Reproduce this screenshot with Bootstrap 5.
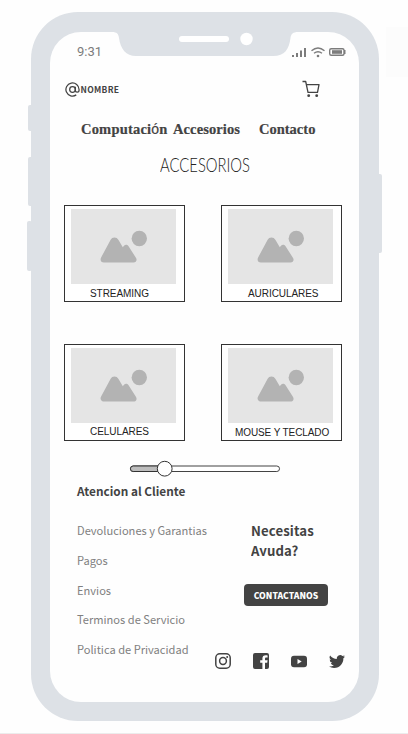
<!DOCTYPE html>
<html lang="es">
<head>
<meta charset="utf-8">
<meta name="viewport" content="width=device-width, initial-scale=1">
<title>Accesorios</title>
<link href="https://cdn.jsdelivr.net/npm/bootstrap@5.3.0/dist/css/bootstrap.min.css" rel="stylesheet">
<style>
body{background:#fefefe;height:734px;overflow:hidden;color:#434343;font-family:"Noto Sans CJK SC","Open Sans",sans-serif}
svg{display:block;flex:none}
.page{height:734px;padding:12px 0 0 30.5px}
.page::after{content:"";position:absolute;left:0;right:0;top:733px;height:1px;background:#ececec}
.side-note{right:0;top:27px;width:22px;height:50px;background:#fcfcfc}
.phone{width:348.5px;height:709px;padding:20px 20px 19px 19.5px;border-radius:47px;background:#dde1e6}
.key{background:#dde1e6;width:5px;border-radius:2px}
.k1{left:-3px;top:93px;height:26px}.k2{left:-3px;top:145px;height:49px}.k3{left:-4px;top:209px;height:50px}.k4{right:-3px;top:162px;height:79px}
.screen{background:#fefefe;border-radius:31px;height:670px}
.notch{left:60px;top:-1px}
.status{height:40px;padding:0 13px 0 27px;color:#7c7c7c}
.clock{font:13px/16px Roboto,sans-serif;letter-spacing:0}
.brand-row{height:34px;padding:0 39px 0 15px}
.brand-name{font-size:8.5px;line-height:12px;font-weight:700;letter-spacing:.3px;margin:-1px 0 0 .5px}
.menu{height:18px;margin-top:14px;padding-left:31px;font:bold 14.5px/18px "Liberation Serif",serif;white-space:nowrap}
.menu a{color:#434343;text-decoration:none;display:block;-webkit-text-stroke:.2px #434343}
.m1{width:92px;letter-spacing:.2px}.m2{width:86px;letter-spacing:.1px}
.m1 span{font:14px/14px "Liberation Sans",sans-serif}
.heading{height:28px;margin:12px 0 0 110px;font:300 20px/28px Lato,sans-serif;color:#222;transform-origin:left;transform:scaleX(.74);white-space:nowrap}
.products{margin:27px 0 0 14px;width:278px;row-gap:42px}
.product{width:121px;height:97px;border:1px solid #333;padding:3px 0 0 6px;background:#fff}
.product p{font:10px/12px "Liberation Sans",sans-serif;color:#222;margin:4px 0 0;white-space:nowrap;letter-spacing:-.06px}
.product .t1{margin-left:19px}.product .t2{margin-left:20px}.product .t3{margin:3px 0 0 19px}.product .t4{margin-left:7px;letter-spacing:-.1px}
.slider{margin:19px 0 0 79px}
.help-title{font-size:11.8px;line-height:18px;font-weight:700;margin:4px 0 0 27px}
.foot{height:140px;margin:21px 0 0 27px}
.links a{display:block;height:29.8px;font-size:11.1px;line-height:18px;color:#808080;text-decoration:none;white-space:nowrap}
.contact{width:84px;margin-right:31px}
.need{font-size:13.2px;line-height:20px;font-weight:700;height:35px;overflow:hidden;margin:0 0 0 7px;letter-spacing:.1px}
.btn-contact{height:22px;width:84px;background:#434343;color:#fff;border-radius:4px;font-size:8.6px;line-height:22px;font-weight:900;margin-top:28px}
.btn-contact:hover{background:#333;color:#fff}
.social{margin:47px 0 0 -29px;width:130px;color:#434343}
</style>
<script src="https://cdn.jsdelivr.net/npm/bootstrap@5.3.0/dist/js/bootstrap.bundle.min.js"></script>
</head>
<body>
<svg width="0" height="0" class="position-absolute"><defs>
<symbol id="photo" viewBox="0 0 105 75"><path fill="#e5e5e5" d="M0 0h105v75H0z"/><circle cx="68.300" cy="29.500" r="7.700" fill="#b3b3b3"/><path fill="#b3b3b3" d="M33 53.500c-3 0-4.200-2.700-2.900-5L39.500 31c1.700-3.300 6.200-3.300 8 0l4.300 7.200 1.200-1.400c1.200-1.500 3.300-1.500 4.400.3l7.500 11.600c1.500 2.400.4 4.800-2.400 4.800z"/></symbol>
</defs></svg>
<div class="page position-relative">
<div class="side-note position-absolute"></div>
<div class="phone position-relative">
<div class="key k1 position-absolute"></div><div class="key k2 position-absolute"></div><div class="key k3 position-absolute"></div><div class="key k4 position-absolute"></div>
<div class="screen position-relative d-flex flex-column">
<svg class="notch position-absolute" width="188" height="26" viewBox="0 0 188 26"><path fill="#dde1e6" d="M0 0h188v1c-5 0-7 2-7.500 6C179 18 175 25 163 25H26C16 25 10.500 18 9 7 8.500 3 7 1 2 1H0z"/><rect x="69" y="5" width="50" height="6" rx="3" fill="#fff"/><circle cx="136.500" cy="8" r="6.200" fill="#fff"/></svg>
<div class="status d-flex align-items-center justify-content-between">
<span class="clock">9:31</span>
<svg width="55" height="12" viewBox="0 0 55 12"><g fill="#7c7c7c"><path d="M1 9h2v2H1zM5 7h2v4H5zM9 4.500h2V11H9zM13 2h2v9h-2z"/><circle cx="27" cy="10" r="1.300"/><path d="M41 4.200h10v3.600H41z"/></g><g fill="none" stroke="#7c7c7c" stroke-width="1.400"><path d="M20.500 4.800q6.500-5.500 13 0M23 7.200q4-3 8 0"/><rect x="38.700" y="2.700" width="14.300" height="6.600" rx="1.500"/></g><path fill="#7c7c7c" d="M53 4h1.500v4H53z"/></svg>
</div>
<div class="brand-row d-flex align-items-center justify-content-between">
<div class="d-flex align-items-center"><svg width="15" height="15" viewBox="0 0 24 24" fill="none" stroke="#434343" stroke-width="2"><circle cx="12" cy="12" r="4.500"/><path d="M16.500 7.500V13a3 3 0 0 0 6 0v-1a10.500 10.500 0 1 0-4.500 8.600"/></svg><span class="brand-name">NOMBRE</span></div>
<svg width="18" height="18" viewBox="0 0 18 18"><g fill="none" stroke="#434343" stroke-width="1.300" stroke-linejoin="round"><path d="M.5 1.500h3.200L6 12.300h9.500l1.500-7.700H4.500"/></g><g fill="#434343"><circle cx="6.700" cy="15.700" r="1.400"/><circle cx="14.700" cy="15.700" r="1.400"/></g></svg>
</div>
<nav class="menu d-flex"><a class="m1" href="#">Computaci<span>ó</span>n</a><a class="m2" href="#">Accesorios</a><a class="m3" href="#">Contacto</a></nav>
<h1 class="heading">ACCESORIOS</h1>
<div class="products d-flex flex-wrap justify-content-between">
<div class="product"><svg width="105" height="75"><use href="#photo"/></svg><p class="t1">STREAMING</p></div>
<div class="product"><svg width="105" height="75"><use href="#photo"/></svg><p class="t2">AURICULARES</p></div>
<div class="product"><svg width="105" height="75"><use href="#photo"/></svg><p class="t3">CELULARES</p></div>
<div class="product"><svg width="105" height="75"><use href="#photo"/></svg><p class="t4">MOUSE Y TECLADO</p></div>
</div>
<svg class="slider" width="152" height="18" viewBox="0 0 152 18"><rect x="1.500" y="6" width="149" height="5.500" rx="2.700" fill="#fff" stroke="#434343"/><path d="M35 6H4.200a2.750 2.750 0 0 0 0 5.500H35" fill="#bdbdbd" stroke="#333"/><circle cx="35.700" cy="8.700" r="7.400" fill="#fff" stroke="#333"/></svg>
<h2 class="help-title">Atencion al Cliente</h2>
<div class="foot d-flex justify-content-between">
<div class="links"><a href="#">Devoluciones y Garantias</a><a href="#">Pagos</a><a href="#">Envios</a><a href="#">Terminos de Servicio</a><a href="#">Politica de Privacidad</a></div>
<div class="contact"><div class="need">Necesitas<br>Ayuda?</div><a href="#" class="btn btn-contact border-0 p-0 d-block">CONTACTANOS</a>
<div class="social d-flex justify-content-between">
<svg width="16" height="16" viewBox="0 0 16 16"><g fill="none" stroke="#434343" stroke-width="1.500"><rect x=".8" y=".8" width="14.400" height="14.400" rx="4"/><circle cx="8" cy="8" r="3.400"/></g><circle cx="12.200" cy="3.900" r="1" fill="#434343"/></svg>
<svg width="16" height="16" viewBox="0 0 16 16"><path fill="#434343" d="M2 0h12a2 2 0 0 1 2 2v12a2 2 0 0 1-2 2h-2V9.800h2.200l.4-2.500H12V5.800c0-.8.400-1.200 1.300-1.200h1.300V2.400c-3.800-.6-5.200.7-5.200 3.100v1.800H7.200v2.500h2.200V16H2a2 2 0 0 1-2-2V2a2 2 0 0 1 2-2z"/></svg>
<svg width="16" height="16" viewBox="0 0 16 16"><rect y="2.700" width="16" height="11.500" rx="3" fill="#434343"/><path fill="#fff" d="m6.500 6 4.200 2.500-4.200 2.500z"/></svg>
<svg width="16" height="16" viewBox="0 0 16 16"><path fill="#434343" d="M5.026 15c6.038 0 9.341-5.003 9.341-9.334q.002-.211-.006-.422A6.700 6.700 0 0 0 16 3.542a6.700 6.700 0 0 1-1.889.518 3.300 3.300 0 0 0 1.447-1.817 6.500 6.500 0 0 1-2.087.793A3.286 3.286 0 0 0 7.875 6.030a9.320 9.320 0 0 1-6.767-3.429 3.290 3.290 0 0 0 1.018 4.382A3.300 3.300 0 0 1 .64 6.575v.045a3.290 3.290 0 0 0 2.632 3.218 3.200 3.200 0 0 1-.865.115 3 3 0 0 1-.614-.057 3.280 3.280 0 0 0 3.067 2.277A6.600 6.600 0 0 1 .78 13.580a6 6 0 0 1-.78-.045A9.340 9.340 0 0 0 5.026 15"/></svg>
</div></div>
</div>
</div></div></div>
</body>
</html>
